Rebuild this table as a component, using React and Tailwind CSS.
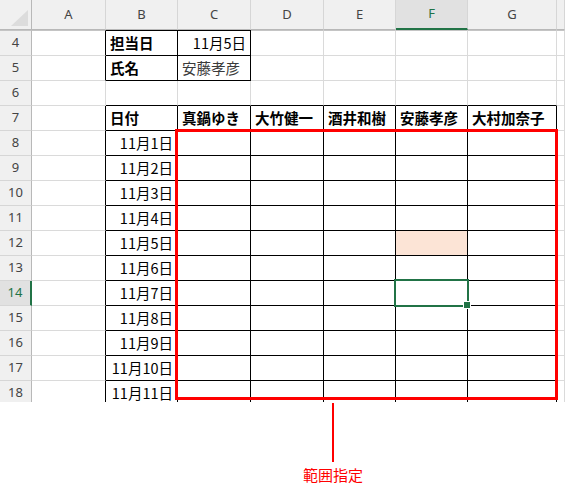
import React from 'react';

const COLS = ['A', 'B', 'C', 'D', 'E', 'F', 'G', 'H'];
const ROWS = [4, 5, 6, 7, 8, 9, 10, 11, 12, 13, 14, 15, 16, 17, 18];
const NAMES = ['真鍋ゆき', '大竹健一', '酒井和樹', '安藤孝彦', '大村加奈子'];

// cells that carry the black table borders
const inTable = (r, c) => {
  if (r >= 4 && r <= 5 && c >= 1 && c <= 2) return true;
  if (r >= 7 && r <= 18 && c >= 1 && c <= 6) return true;
  return false;
};

const content = (r, c) => {
  if (r === 4 && c === 1) return { text: '担当日', bold: true };
  if (r === 4 && c === 2) return { text: '11月5日', right: true };
  if (r === 5 && c === 1) return { text: '氏名', bold: true };
  if (r === 5 && c === 2) return { text: '安藤孝彦', soft: true };
  if (r === 7 && c === 1) return { text: '日付', bold: true };
  if (r === 7 && c >= 2 && c <= 6) return { text: NAMES[c - 2], bold: true };
  if (r >= 8 && c === 1) return { text: `11月${r - 7}日`, right: true };
  return null;
};

const Cell = ({ r, c }) => {
  const blackRight = inTable(r, c) || inTable(r, c + 1);
  const blackBottom = inTable(r, c) || inTable(r + 1, c);
  const blackTop = r === 4 && inTable(r, c);
  const fill = r === 12 && c === 5;
  const data = content(r, c);

  return (
    <div
      className={`flex items-center overflow-hidden whitespace-nowrap border-r border-b ${
        blackRight ? 'border-r-black' : 'border-r-[#dadada]'
      } ${blackBottom ? 'border-b-black' : 'border-b-[#dadada]'} ${
        r === 4 ? (blackTop ? 'border-t border-t-black' : 'border-t border-t-[#c4c4c4]') : ''
      } ${fill ? 'bg-[#fce4d6]' : 'bg-white'} ${data && data.right ? 'justify-end pr-[4px]' : 'justify-start pl-[4px]'}`}
    >
      {data && (
        <span
          className={`text-[14.5px] leading-none ${data.bold ? 'font-bold text-black' : 'font-normal'} ${
            data.soft ? 'text-[#3a3a3a]' : 'text-black'
          }`}
        >
          {data.text}
        </span>
      )}
    </div>
  );
};

export default function App() {
  return (
    <div className="w-[565px] h-[484px] bg-white font-['Noto_Sans_CJK_JP',sans-serif] overflow-hidden">
      {/* Sheet */}
      <div className="relative h-[402px] overflow-hidden">
        <div className="grid grid-cols-[32px_74px_72px_73px_73px_72px_72px_89px_1fr] grid-rows-[30px_26px_repeat(14,25px)]">
          {/* corner */}
          <div className="flex items-end justify-end pr-[3px] pb-[3px] bg-[#f0f0f0] border-r border-b border-r-[#b8b8b8] border-b-[#b8b8b8]">
            <svg width="17" height="16" viewBox="0 0 17 16">
              <polygon points="17,0 17,16 0,16" fill="#dcdcdc" />
            </svg>
          </div>
          {COLS.map((col) => (
            <div
              key={col}
              className={`flex items-center justify-center text-[13px] font-['Noto_Sans',sans-serif] border-r border-r-[#d6d6d6] ${
                col === 'F'
                  ? 'bg-[#e1e1e1] text-[#217346] border-b-2 border-b-[#217346]'
                  : 'bg-[#f0f0f0] text-[#444444] border-b border-b-[#b8b8b8]'
              }`}
            >
              {col !== 'H' ? col : ''}
            </div>
          ))}

          {ROWS.map((r) => (
            <React.Fragment key={r}>
              <div
                className={`flex items-center justify-center text-[13px] font-['Noto_Sans',sans-serif] border-b border-b-[#d6d6d6] ${
                  r === 4 ? 'border-t border-t-[#c4c4c4]' : ''
                } ${
                  r === 14
                    ? 'bg-[#e1e1e1] text-[#217346] border-r-2 border-r-[#217346]'
                    : 'bg-[#f0f0f0] text-[#444444] border-r border-r-[#b8b8b8]'
                }`}
              >
                {r}
              </div>
              {COLS.map((col, i) => (
                <Cell key={col} r={r} c={i} />
              ))}
            </React.Fragment>
          ))}
        </div>

        {/* selected cell F14 */}
        <div className="absolute left-[394px] top-[279px] w-[75px] h-[28px] border-2 border-[#217346]" />
        <div className="absolute left-[463px] top-[301px] w-[8px] h-[8px] bg-[#217346] border border-white" />

        {/* range frame */}
        <div className="absolute left-[175px] top-[129px] w-[383px] h-[271px] border-[3px] border-[#ff0000]" />
      </div>

      {/* Annotation */}
      <div className="ml-[302px] w-[62px] flex flex-col items-center">
        <div className="mt-px w-[2px] h-[59px] bg-[#ff0000]" />
        <span className="mt-[3px] text-[15px] leading-[20px] text-[#ff0000] whitespace-nowrap">範囲指定</span>
      </div>
    </div>
  );
}
